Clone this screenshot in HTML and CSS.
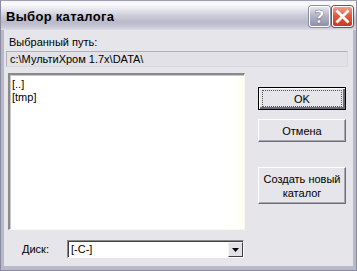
FILE: index.html
```html
<!DOCTYPE html>
<html>
<head>
<meta charset="utf-8">
<link rel="stylesheet" href="styles.css">
</head>
<body>
<div class="window">
  <div class="titlebar">
    <span class="title">Выбор каталога</span>
    <div class="caption-buttons">
      <div class="cbtn help"><svg width="21" height="21" viewBox="0 0 21 21"><text x="10.5" y="17" text-anchor="middle" class="qmark">?</text></svg></div>
      <div class="cbtn close"><svg width="21" height="21" viewBox="0 0 21 21"><path d="M5.5 5.5 L15.5 15.5 M15.5 5.5 L5.5 15.5" stroke="#fff" stroke-width="2.8" stroke-linecap="square"/></svg></div>
    </div>
  </div>
  <div class="client">
    <div class="label">Выбранный путь:</div>
    <div class="path">c:\МультиХром 1.7x\DATA\</div>
    <div class="main">
      <div class="listbox">
        <div class="item">[..]</div>
        <div class="item">[tmp]</div>
      </div>
      <div class="buttons">
        <div class="btn default"><span class="focus">OK</span></div>
        <div class="btn">Отмена</div>
        <div class="btn tall">Создать новый<br>каталог</div>
      </div>
    </div>
    <div class="disk-row">
      <span class="disk-label"><u>Д</u>иск:</span>
      <div class="combo">
        <span class="combo-text">[-C-]</span>
        <span class="combo-btn"><svg width="7" height="4" viewBox="0 0 7 4"><path d="M0 0h7L3.5 4z" fill="#000"/></svg></span>
      </div>
    </div>
  </div>
</div>
</body>
</html>
```
FILE: styles.css
```css
html, body {
  margin: 0;
  padding: 0;
  background: #e4e3e8;
}
body {
  font-family: "Liberation Sans", Arial, sans-serif;
  font-size: 11px;
  color: #000;
}
.window {
  width: 357px;
  height: 271px;
  box-sizing: border-box;
  display: flex;
  flex-direction: column;
  background: #b8b8c8;
  border: 1px solid #8a8aa0;
  border-top: 1px solid #a0a0b4;
}
.titlebar {
  height: 29px;
  display: flex;
  align-items: center;
  justify-content: space-between;
  padding: 0 3px 0 5px;
  background: linear-gradient(to bottom, #f4f4f8 0px, #fbfbfd 3px, #e8e8ef 8px, #cbcbd8 15px, #b9b9cb 21px, #c4c4d3 25px, #dcdce6 29px);
}
.title {
  font-family: "Liberation Sans", Arial, sans-serif;
  font-weight: bold;
  font-size: 13px;
  color: #000;
  letter-spacing: 0.3px;
  margin-top: 1px;
}
.caption-buttons {
  display: flex;
  gap: 2px;
  margin-top: 1px;
}
.cbtn {
  width: 21px;
  height: 21px;
  box-sizing: border-box;
  border-radius: 3px;
  border: 1px solid #fff;
  display: flex;
  align-items: center;
  justify-content: center;
  overflow: hidden;
}
.cbtn svg { display: block; margin: -1px; }
.help {
  background: linear-gradient(to bottom, #e6e6f0 0%, #b4b4c8 45%, #8e8ea8 100%);
  box-shadow: 0 0 0 1px #8c8ca4;
}
.qmark {
  font-family: "DejaVu Sans", sans-serif;
  font-weight: bold;
  font-size: 18px;
  fill: #fff;
  stroke: #707088;
  stroke-width: 0.5;
}
.close {
  background: linear-gradient(to bottom, #f4a090 0%, #e05a3c 45%, #c8381e 100%);
  box-shadow: 0 0 0 1px #a04030;
}
.client {
  flex: 1;
  margin: 0 3px 4px 3px;
  background: #e6e5ea;
  display: flex;
  flex-direction: column;
}
.label {
  margin: 6px 0 0 5px;
  line-height: 13px;
  height: 13px;
}
.path {
  margin: 2px 5px 0 2px;
  height: 16px;
  box-sizing: border-box;
  border: 1px solid #b0b0bc;
  border-right-color: #d8d8e0;
  border-bottom-color: #d8d8e0;
  background: #e2e1e6;
  padding-left: 3px;
  line-height: 14px;
}
.main {
  display: flex;
  margin-top: 6px;
}
.listbox {
  margin-left: 4px;
  width: 237px;
  height: 157px;
  box-sizing: border-box;
  border-top: 2px solid #8a8a8a;
  border-left: 2px solid #8a8a8a;
  border-right: 1px solid #f8f8f0;
  border-bottom: 1px solid #f8f8f0;
  box-shadow: inset 1px 1px 0 #c8c8c8;
  background: linear-gradient(to right, #ffffff 92%, #fffff6 100%);
  padding: 3px 0 0 2px;
}
.item {
  line-height: 13px;
  height: 13px;
}
.buttons {
  margin-left: 13px;
  padding-top: 14px;
  display: flex;
  flex-direction: column;
  width: 88px;
}
.btn {
  height: 23px;
  box-sizing: border-box;
  border: 1px solid;
  border-color: #ffffff #6c6c78 #6c6c78 #ffffff;
  box-shadow: inset -1px -1px 0 #a8a8b4;
  background: #e6e5ea;
  display: flex;
  align-items: center;
  justify-content: center;
  text-align: center;
  line-height: 14px;
  margin-bottom: 9px;
}
.btn.default {
  border: 1px solid #000;
  box-shadow: inset 1px 1px 0 #fff, inset -2px -2px 0 #6c6c78;
}
.focus {
  display: flex;
  align-items: center;
  justify-content: center;
  width: 78px;
  height: 15px;
  border: 1px dotted #555;
}
.btn.tall {
  height: 37px;
  margin-top: 16px;
}
.disk-row {
  display: flex;
  align-items: center;
  margin-top: 10px;
}
.disk-label {
  margin-left: 18px;
  width: 45px;
}
.disk-label u { text-decoration: underline; }
.combo {
  width: 177px;
  height: 18px;
  box-sizing: border-box;
  border: 1px solid;
  border-color: #8a8a8a #ffffff #ffffff #8a8a8a;
  box-shadow: inset 1px 1px 0 #404040;
  background: #fff;
  display: flex;
  align-items: stretch;
}
.combo-text {
  flex: 1;
  padding-left: 3px;
  line-height: 15px;
  padding-top: 1px;
}
.combo-btn {
  width: 15px;
  margin: 1px 0 0 0;
  box-sizing: border-box;
  border: 1px solid;
  border-color: #f4f4f4 #404040 #404040 #f4f4f4;
  background: #e2e1e6;
  display: flex;
  align-items: center;
  justify-content: center;
}
.combo-btn svg { display: block; }
```
